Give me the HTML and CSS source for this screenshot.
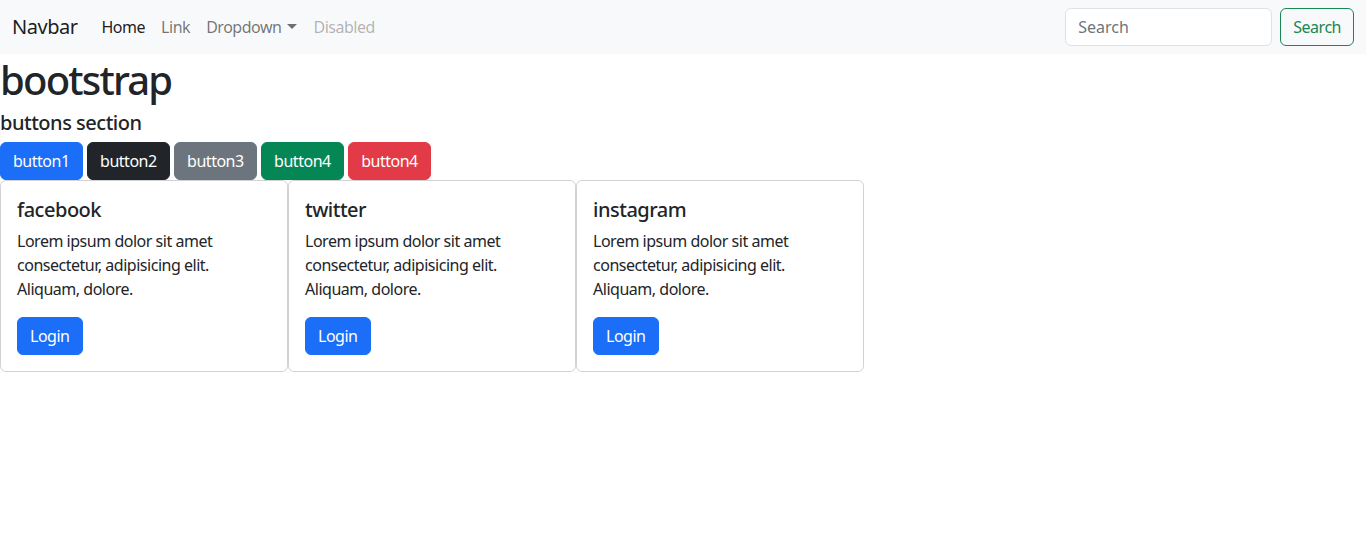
FILE: index.html
```html
<!DOCTYPE html>
<html lang="en">
<head>
<meta charset="utf-8">
<title>bootstrap</title>
<link rel="stylesheet" href="styles.css">
</head>
<body>
<nav class="navbar">
  <div class="navbar-inner">
    <div class="navbar-left">
      <a class="brand" href="#">Navbar</a>
      <ul class="nav">
        <li><a class="nav-link active" href="#">Home</a></li>
        <li><a class="nav-link" href="#">Link</a></li>
        <li><a class="nav-link dropdown" href="#">Dropdown<span class="caret"></span></a></li>
        <li><a class="nav-link disabled" href="#">Disabled</a></li>
      </ul>
    </div>
    <form class="search">
      <input class="search-input" type="search" placeholder="Search">
      <button class="btn btn-outline-success" type="button">Search</button>
    </form>
  </div>
</nav>
<h1 class="title">bootstrap</h1>
<h5 class="subtitle">buttons section</h5>
<div class="buttons">
  <button class="btn btn-primary">button1</button>
  <button class="btn btn-dark">button2</button>
  <button class="btn btn-secondary">button3</button>
  <button class="btn btn-success">button4</button>
  <button class="btn btn-danger">button4</button>
</div>
<div class="cards">
  <div class="card">
    <h5 class="card-title">facebook</h5>
    <p class="card-text">Lorem ipsum dolor sit amet consectetur, adipisicing elit. Aliquam, dolore.</p>
    <a href="#" class="btn btn-primary">Login</a>
  </div>
  <div class="card">
    <h5 class="card-title">twitter</h5>
    <p class="card-text">Lorem ipsum dolor sit amet consectetur, adipisicing elit. Aliquam, dolore.</p>
    <a href="#" class="btn btn-primary">Login</a>
  </div>
  <div class="card">
    <h5 class="card-title">instagram</h5>
    <p class="card-text">Lorem ipsum dolor sit amet consectetur, adipisicing elit. Aliquam, dolore.</p>
    <a href="#" class="btn btn-primary">Login</a>
  </div>
</div>
</body>
</html>
```

FILE: styles.css
```css
* { box-sizing: border-box; }
body {
  margin: 0;
  font-family: "Noto Sans", "Open Sans", sans-serif;
  font-size: 16px;
  line-height: 1.5;
  letter-spacing: -0.03em;
  color: #212529;
  background: #fff;
}
a { text-decoration: none; }
.navbar {
  background: #f8f9fa;
  padding: 8px 0;
}
.navbar-inner {
  display: flex;
  align-items: center;
  justify-content: space-between;
  padding: 0 12px;
}
.navbar-left {
  display: flex;
  align-items: center;
}
.brand {
  font-size: 20px;
  line-height: 30px;
  padding: 4px 0;
  margin-right: 16px;
  color: rgba(0,0,0,.9);
}
.nav {
  display: flex;
  list-style: none;
  margin: 0;
  padding: 0;
}
.nav-link {
  display: block;
  padding: 7px 8px;
  color: rgba(0,0,0,.55);
}
.nav-link.active { color: rgba(0,0,0,.9); }
.nav-link.disabled { color: rgba(0,0,0,.3); }
.caret {
  display: inline-block;
  margin-left: 6px;
  vertical-align: 4px;
  border-top: 5px solid;
  border-left: 5px solid transparent;
  border-right: 5px solid transparent;
}
.search {
  display: flex;
  margin: 0;
}
.search-input {
  width: 207px;
  height: 38px;
  padding: 6px 12px;
  margin-right: 8px;
  font: inherit;
  color: #212529;
  background: #fff;
  border: 1px solid #dee2e6;
  border-radius: 6px;
}
.search-input::placeholder { color: #6c757d; }
.btn {
  display: inline-block;
  height: 38px;
  padding: 6px 12px;
  font: inherit;
  letter-spacing: inherit;
  line-height: 24px;
  border: 1px solid transparent;
  border-radius: 6px;
  color: #fff;
  cursor: pointer;
  vertical-align: middle;
}
.btn-outline-success { color: #198754; border-color: #198754; background: transparent; }
.btn-primary { background: #1a6ef8; border-color: #1a6ef8; }
.btn-dark { background: #212529; border-color: #212529; }
.btn-secondary { background: #6c757d; border-color: #6c757d; }
.btn-success { background: #058755; border-color: #058755; }
.btn-danger { background: #e23a46; border-color: #e23a46; }
.title {
  margin: 0 0 6px;
  padding-top: 2px;
  font-size: 40px;
  font-weight: 500;
  line-height: 1.2;
  letter-spacing: -0.045em;
}
.subtitle {
  margin: 0 0 7px;
  padding-top: 1px;
  font-size: 20px;
  font-weight: 500;
  line-height: 1.2;
}
.buttons {
  display: flex;
  gap: 4.4px;
}
.cards {
  display: flex;
}
.card {
  width: 288px;
  padding: 16px;
  border: 1px solid rgba(0,0,0,.175);
  border-radius: 6px;
}
.card-title {
  margin: 0 0 7px;
  padding-top: 1px;
  font-size: 20px;
  font-weight: 500;
  line-height: 1.2;
}
.card-text {
  margin: 0 0 16px;
}
```
